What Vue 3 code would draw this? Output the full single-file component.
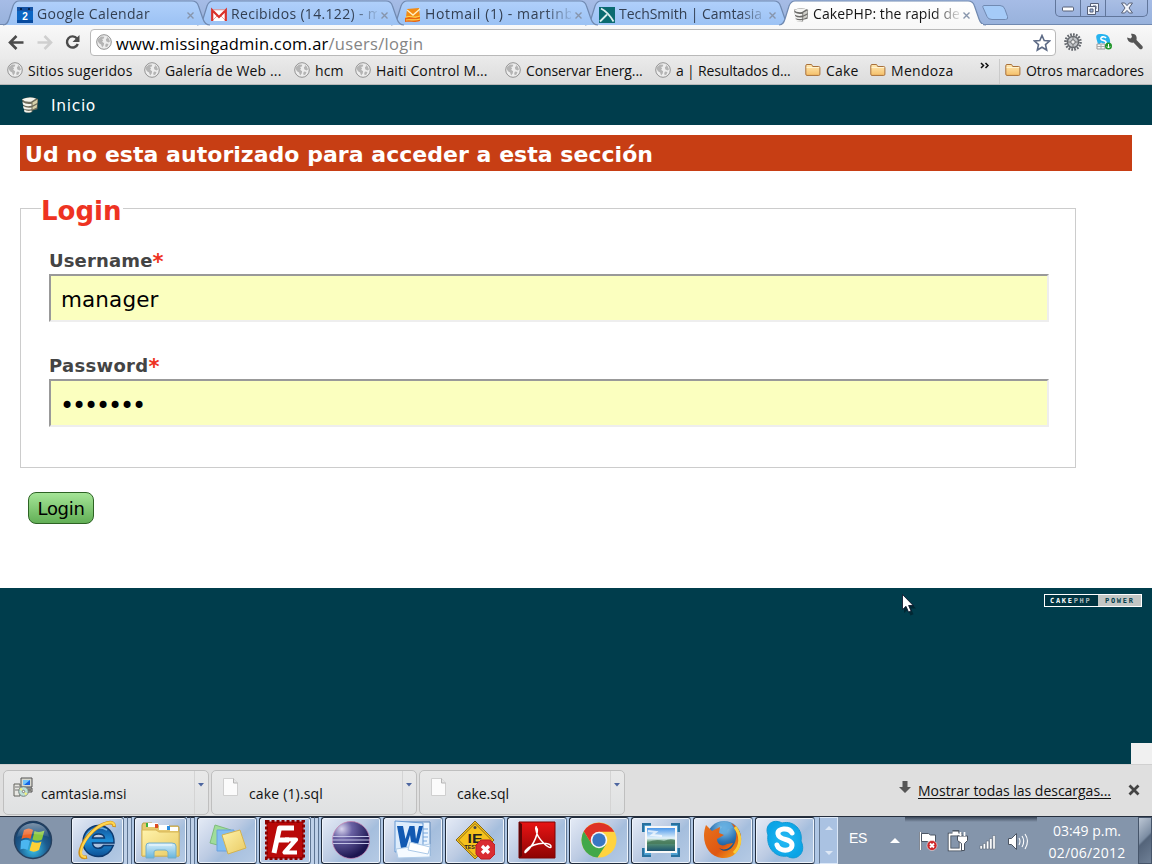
<script setup>
// Spreads a label's letters so that it fills the given width in pixels.
const vFit = {
  mounted(el, { value }) {
    const n = [...el.textContent].length
    const spacing = (value - el.getBoundingClientRect().width) / n
    el.style.letterSpacing = spacing.toFixed(3) + 'px'
  },
}

const tabs = [
  { icon: 'calendar', title: 'Google Calendar', width: 113 },
  { icon: 'gmail', title: 'Recibidos (14.122) - m', width: 150 },
  { icon: 'hotmail', title: 'Hotmail (1) - martinbr', width: 155 },
  { icon: 'techsmith', title: 'TechSmith | Camtasia', width: 143 },
  { icon: 'cake', title: 'CakePHP: the rapid dev', width: 154, active: true },
]

const bookmarks = [
  { icon: 'globe', title: 'Sitios sugeridos', width: 104.5 },
  { icon: 'globe', title: 'Galería de Web ...', width: 116.5 },
  { icon: 'globe', title: 'hcm', width: 28.5 },
  { icon: 'globe', title: 'Haiti Control M...', width: 111.5 },
  { icon: 'globe', title: 'Conservar Energ...', width: 116.5 },
  { icon: 'globe', title: 'a | Resultados d...', width: 114.5 },
  { icon: 'folder', title: 'Cake', width: 32.5 },
  { icon: 'folder', title: 'Mendoza', width: 62.5 },
]

const downloads = [
  { icon: 'msi', title: 'camtasia.msi', width: 85.5 },
  { icon: 'file', title: 'cake (1).sql', width: 74 },
  { icon: 'file', title: 'cake.sql', width: 52 },
]

const apps = [
  { icon: 'ie', stack: true },
  { icon: 'explorer', stack: true },
  { icon: 'notes' },
  { icon: 'filezilla', stack: true },
  { icon: 'eclipse' },
  { icon: 'word' },
  { icon: 'ietester' },
  { icon: 'acrobat' },
  { icon: 'chrome' },
  { icon: 'snip' },
  { icon: 'firefox' },
  { icon: 'skype' },
]
</script>

<template>
  <div class="screen">
    <svg class="sprites" width="0" height="0">
      <defs>
        <linearGradient id="gTab" x2="0" y2="1"><stop offset="0" stop-color="#b0d0fb" /><stop offset="1" stop-color="#9cc2f4" /></linearGradient>
        <linearGradient id="gTabOn" x2="0" y2="1"><stop offset="0" stop-color="#fff" /><stop offset="1" stop-color="#f8f8f8" /></linearGradient>
        <linearGradient id="gFolder" x2="0" y2="1"><stop offset="0" stop-color="#ffe9b4" /><stop offset="1" stop-color="#f5bf68" /></linearGradient>
        <linearGradient id="gYellow" x2="1" y2="1"><stop offset="0" stop-color="#fff3ac" /><stop offset="1" stop-color="#e9ca62" /></linearGradient>
        <linearGradient id="gGlass" x2="0" y2="1"><stop offset="0" stop-color="#d7effb" /><stop offset="1" stop-color="#65b4dc" /></linearGradient>
        <radialGradient id="gOrb" cx=".5" cy=".75" r=".7"><stop offset="0" stop-color="#39c5ee" /><stop offset=".55" stop-color="#1c5b8f" /><stop offset="1" stop-color="#143a63" /></radialGradient>
        <linearGradient id="gShine" x2="0" y2="1"><stop offset="0" stop-color="#fff" stop-opacity=".75" /><stop offset="1" stop-color="#fff" stop-opacity=".1" /></linearGradient>
        <radialGradient id="gEclipse" cx=".25" cy=".2" r=".8"><stop offset="0" stop-color="#d9d5ee" /><stop offset=".35" stop-color="#6a62a4" /><stop offset="1" stop-color="#1c1550" /></radialGradient>
        <linearGradient id="gIe" x2="0" y2="1"><stop offset="0" stop-color="#0f4f96" /><stop offset=".5" stop-color="#1f8fd8" /><stop offset="1" stop-color="#0b4f94" /></linearGradient>
        <linearGradient id="gRed" x2="0" y2="1"><stop offset="0" stop-color="#e81414" /><stop offset="1" stop-color="#8d0303" /></linearGradient>
        <linearGradient id="gSky" x2="0" y2="1"><stop offset="0" stop-color="#3c8ee8" /><stop offset=".45" stop-color="#e4f3fb" /><stop offset=".6" stop-color="#5f9a72" /><stop offset="1" stop-color="#154c70" /></linearGradient>
        <linearGradient id="gFox" x2="1" y2="1"><stop offset="0" stop-color="#e8731c" /><stop offset=".6" stop-color="#df5711" /><stop offset="1" stop-color="#f9b41c" /></linearGradient>
        <radialGradient id="gSea" cx=".5" cy=".2" r=".8"><stop offset="0" stop-color="#8fcdf0" /><stop offset=".5" stop-color="#2f76b5" /><stop offset="1" stop-color="#10335f" /></radialGradient>
        <radialGradient id="gSkype"><stop offset="0" stop-color="#27bbf4" /><stop offset="1" stop-color="#0ba4e6" /></radialGradient>
      </defs>

      <symbol id="globe" viewBox="0 0 16 16">
        <circle cx="8" cy="8" r="7.3" fill="#ededed" stroke="#929292" />
        <path d="M2 5l3-2.600 3.300.4-.5 1.600-1.700.5 1 1.600-1 1.200 2 1.600-.4 2.100-1.600 2-1-2.800L3 9.200 1.700 7zM10.500 2.500l2.300 2 1.200 3-1.500 1-2.300-1.200-.3-2.200 1.400-.8zM10 9.500l2.500.5-1 2.500-1.800.8-.5-2z" fill="#b4b4b4" />
      </symbol>
      <symbol id="folder" viewBox="0 0 16 16">
        <path d="M.8 12.200V3.800q0-1.300 1.200-1.300h4q1 0 1.300 1l.4 1h6q1.200 0 1.200 1.200v6.500q0 1.200-1.200 1.200H2Q.8 13.400.8 12.200z" fill="url(#gFolder)" stroke="#a8703a" />
        <path d="M1.600 5.500h12.600" stroke="#fff3cf" />
      </symbol>
      <symbol id="calendar" viewBox="0 0 16 16">
        <path d="M0 0h16v16H0z" fill="#0b66c3" /><path d="M0 0h16v4H0z" fill="#1553a4" /><path d="M0 13h16v3H0z" fill="#084a9f" />
        <path d="M3 1h2v2H3zM11 1h2v2h-2z" fill="#07264f" />
        <text x="8" y="13" text-anchor="middle" font-family="Liberation Sans, sans-serif" font-weight="bold" font-size="10" fill="#fff">2</text>
      </symbol>
      <symbol id="gmail" viewBox="0 0 16 16">
        <path d="M1 3h14v11H1z" fill="#fff" /><path d="M1 14l5-5M15 14l-5-5" stroke="#e8a49e" />
        <path d="M1.200 14V3.200L8 10l6.800-6.800V14" fill="none" stroke="#d9322b" stroke-width="2.200" /><path d="M2 2.800h12" stroke="#e9908a" />
      </symbol>
      <symbol id="hotmail" viewBox="0 0 16 16">
        <path d="M2 2l12-1 1 9-7 1-7-1z" fill="#f38b13" /><path d="M2 3l6 5 7-6" fill="none" stroke="#fff0c2" stroke-width="1.400" />
        <path d="M0 11c4-3 7 2 15-2v5c-6 2-10 0-15 1z" fill="#e96712" /><path d="M1 10c5-2 8 2 14-1M1 13c4-1 8 1 14-1" fill="none" stroke="#ffd84f" stroke-width="1.200" />
      </symbol>
      <symbol id="techsmith" viewBox="0 0 16 16">
        <path d="M0 0h16v16H0z" fill="#0a6b70" /><path d="M2 1.500Q9 5 14.500 14.500M1 14.500l7-7" fill="none" stroke="#dcefee" stroke-width="1.800" />
      </symbol>
      <symbol id="cake" viewBox="0 0 18 18">
        <path d="M1 3.200Q9-.5 17 3l-.6 10.200-5 1.200V16q-5 1.500-7.800-.5z" fill="#6f6c5b" />
        <path d="M1 3.300Q8 .3 15 2.500L10 5.700Q4 6.500 1 3.300zM1.500 6q4 2.800 9 1.700v2Q5 11 2 8.500zM2 10q3.500 2.500 8.500 1.500v1.700Q5.500 14.300 2.500 12.500zM3 13.600q3 2 7.500 1v1.300q-4 1.300-7 0z" fill="#f5f5ed" />
        <path d="M11.500 6.600l5-3-.3 3.500-4.700 2.500zM11.500 11l4.500-2.400-.2 3-4.300 1.900z" fill="#d6d1aa" />
      </symbol>
      <symbol id="msi" viewBox="0 0 20 20">
        <path d="M1 7h6v12H1z" fill="#e8e8e3" stroke="#62625c" /><path d="M2 10h4M2 13h4" stroke="#777" />
        <path d="M8 1h11v9H8z" fill="#d8d8cf" stroke="#555" /><path d="M10 3h7v5h-7z" fill="#1565e3" /><path d="M10 3h7l-6 5h-1z" fill="#70c4fa" />
        <path d="M8 11h11v4H8z" fill="#c8c8bf" stroke="#555" /><path d="M15 13h3" stroke="#333" />
        <circle cx="10.500" cy="14.500" r="4.800" fill="#bde0d7" stroke="#77817e" /><path d="M10.500 14.500l-4-2 1.500-2zM10.500 14.500l4 2-2 2z" fill="#f1ef7b" /><circle cx="10.500" cy="14.500" r="1.200" fill="#fff" stroke="#777" />
      </symbol>
      <symbol id="file" viewBox="0 0 20 20">
        <path d="M2.500 1.500h10l4 4.500v12.500h-14z" fill="#fbfbfb" stroke="#cfcfcf" /><path d="M12.500 1.500V6h4" fill="#e5e5e5" stroke="#b5b5b5" />
      </symbol>

      <symbol id="ie" viewBox="0 0 40 40">
        <path d="M36 23H14.500c.5 6 8 7 11 2.500h9.800C32 34 26 36.500 20.500 36.500 11 36.500 5 30 5 22 5 12 12 5.500 20.500 5.500 30 5.500 36.500 13 36 23zM14.500 18h12c-.5-5.500-11.200-5.500-12 0z" fill="url(#gIe)" stroke="#0c3a70" stroke-width="1.500" />
        <path d="M8 17c3-8 12-12 21-7" fill="none" stroke="#8ed4ff" stroke-width="1.500" opacity=".7" />
        <path d="M9 37C-3 40 2 23 15 11 24 3 37-1 36 7" fill="none" stroke="#cf9118" stroke-width="3.600" /><path d="M8 37C-2 38 4 22 15 11 24 3 37-1 36 6" fill="none" stroke="#ffd54e" stroke-width="2.200" />
      </symbol>
      <symbol id="explorer" viewBox="0 0 40 40">
        <path d="M2 3h9l2 3h24q1 0 1 2v28H1V5z" fill="#e5c96f" stroke="#bd9f49" /><path d="M5 3h5v4H5z" fill="#3bb23b" /><path d="M7 3h10v4H7zM18 5h10v5H18zM29 7h8v4h-8z" fill="#fff" /><path d="M14 4h3v4h-3z" fill="#dc4b24" /><path d="M26 6h3v4h-3z" fill="#2b8ce0" />
        <path d="M1 10h14l3 2h20v24H1z" fill="url(#gYellow)" stroke="#d8b756" />
        <path d="M5 38V26q0-3 3-3h23q4 0 4 3v12h-8v-6q-1-2-3-2h-8q-3 0-3 2v6z" fill="url(#gGlass)" stroke="#72aecb" /><path d="M8 25h23" stroke="#fff" opacity=".8" />
      </symbol>
      <symbol id="notes" viewBox="0 0 40 40">
        <path d="M8 5l16 5-6 17-15-4z" fill="#a0dd9a" stroke="#7fbd7d" /><path d="M10 10h17v21H10z" fill="#82bdf3" stroke="#69a1df" /><path d="M15 15l18-5 6 18-18 6z" fill="url(#gYellow)" stroke="#d3b352" />
      </symbol>
      <symbol id="filezilla" viewBox="0 0 40 40">
        <path d="M1.500 1.500h37v37h-37z" fill="#b50606" stroke="#8c0202" stroke-width="3" stroke-dasharray="3 2" /><path d="M3 3h34v34H3z" fill="#b90909" />
        <path d="M9 33L14.500 8H29M12 20h12" fill="none" stroke="#fff" stroke-width="5" stroke-linejoin="round" /><path d="M20 19.500h11L19.500 32.500H32" fill="none" stroke="#fff" stroke-width="4.200" stroke-linejoin="round" />
      </symbol>
      <symbol id="eclipse" viewBox="0 0 40 40">
        <circle cx="20" cy="20" r="18.500" fill="url(#gEclipse)" stroke="#c67baa" stroke-width=".7" /><path d="M2 16.500h36M1 20h38M2 23.500h36" stroke="#c3c3e6" stroke-width="1.200" />
      </symbol>
      <symbol id="word" viewBox="0 0 40 40">
        <path d="M10 2h27v34H8z" fill="#e9f3fd" stroke="#5e88b9" /><path d="M27 9h8M27 13h8M27 17h8M25 21h9" stroke="#79a8de" />
        <path d="M2 1l28 2v25L2 32z" fill="#ddecfc" stroke="#6799d3" /><path d="M4 6h6l2.500 13L16.500 6h5l1.500 13L26 6h4l-6 22h-5l-2-13-4 13H8z" fill="#1259b2" />
        <path d="M3 29l34-5v13l-32 1z" fill="#f5faff" stroke="#b0cce9" /><path d="M17 22l20 5-2 7-20-4z" fill="#fff" stroke="#abc9e8" />
      </symbol>
      <symbol id="ietester" viewBox="0 0 40 40">
        <path d="M20 1l19 19-19 19L1 20z" fill="#f5c11c" stroke="#85691a" /><path d="M20 3.500L36.500 20 20 36.500 3.500 20z" fill="none" stroke="#8d6d13" />
        <circle cx="20" cy="7.500" r="1.500" fill="#4a4a4a" /><text x="20" y="23" text-anchor="middle" font-family="Liberation Sans, sans-serif" font-weight="bold" font-size="12.500" textLength="15" lengthAdjust="spacingAndGlyphs" fill="#222">IE</text>
        <text x="20" y="29" text-anchor="middle" font-family="Liberation Sans, sans-serif" font-weight="bold" font-size="6" textLength="21" lengthAdjust="spacingAndGlyphs" fill="#222">TESTER</text>
        <path d="M26 20h9l5 5v9l-5 5h-9l-5-5v-9z" fill="#d92d32" stroke="#b92124" /><path d="M27 26l7 7M34 26l-7 7" stroke="#fff" stroke-width="3.200" />
      </symbol>
      <symbol id="acrobat" viewBox="0 0 40 40">
        <path d="M2 2h36v36H2z" fill="url(#gRed)" stroke="#7c0505" /><path d="M2 2l3 2v32l-3 2z" fill="#5d0505" />
        <path d="M19 7c4 4-2 18-10 25-2 2-2-3 8-7 8-3 18-2 17 2-1 3-14-8-15-17-1-3 1-4 0-3z" fill="none" stroke="#fff" stroke-width="1.500" />
      </symbol>
      <symbol id="chrome" viewBox="0 0 40 40">
        <circle cx="20" cy="20" r="17.500" fill="#ffd33f" />
        <path d="M12.900 24.200L4.800 11.300A17.500 17.500 0 0 0 18.500 37.500L27.200 24.200z" fill="#42a84a" />
        <path d="M4.800 11.300A17.500 17.500 0 0 1 35.300 11.800H20L12.900 24.200z" fill="#de3226" />
        <circle cx="20" cy="20" r="8.300" fill="#f6f6f6" /><circle cx="20" cy="20" r="6.700" fill="#3977c3" />
      </symbol>
      <symbol id="snip" viewBox="0 0 40 40">
        <path d="M3.500 12V5.500H10M30 5.500h6.500V12M36.500 28v6.500H30M10 34.500H3.500V28" fill="none" stroke="#28719f" stroke-width="5" /><path d="M4 12V6h6M30 6h6v6M36 28v6h-6M10 34H4v-6" fill="none" stroke="#5baee0" stroke-width="1.500" />
        <path d="M5 7h30v25H5z" fill="url(#gSky)" stroke="#f8f8f8" stroke-width="2" /><path d="M6 23q8-5 17-2 6-3 11-1v4H6z" fill="#47795a" opacity=".8" /><path d="M7 11l8 1-4 3 10 1" fill="none" stroke="#fff" stroke-width="2" opacity=".7" />
      </symbol>
      <symbol id="firefox" viewBox="0 0 40 40">
        <circle cx="21" cy="18" r="17" fill="url(#gSea)" /><path d="M14 3l5 4-3 4 7 3 2-5 5-1-2-5" fill="#5faade" opacity=".8" />
        <path d="M3 5l6 6 8-4-1 6 5 2-7 4c0 6 6 8 10 5l6-1c-3 6-9 8-14 5 8 8 19-2 17-16-1-4-3-7-5-9 7 3 11 11 10 18C37 33 28 39 19 38 5 37-3 21 3 5z" fill="url(#gFox)" />
        <path d="M32 7c7 9 6 19-1 26" fill="none" stroke="#f9ce3b" stroke-width="3" />
      </symbol>
      <symbol id="skype" viewBox="0 0 40 40">
        <path d="M3 15C-1 5 8-2 17 3 29 0 38 10 36 21c6 12-5 21-14 15C10 38 1 27 3 15z" fill="url(#gSkype)" stroke="#1099d4" />
        <path d="M27 13c-3-6-15-5-14 1 1 7 14 4 14 11 0 7-13 7-15 0" fill="none" stroke="#fff" stroke-width="5" stroke-linecap="round" />
      </symbol>
    </svg>

    <header class="tabstrip">
      <div v-for="t in tabs" :key="t.title" class="tab" :class="{ active: t.active }">
        <svg class="tab-shape" width="207" height="26" viewBox="0 0 207 26">
          <path d="M0 25c4 0 5-3 6-6L10 6q2-5 6-5H189q5 0 6.500 5L200 19c1 3 3 6 7 6" :fill="t.active ? 'url(#gTabOn)' : 'url(#gTab)'" stroke="#7089b0" stroke-width="1.200" />
          <path v-if="t.active" d="M4 25h200" stroke="#f8f8f8" stroke-width="2" />
        </svg>
        <svg class="i16"><use :href="'#' + t.icon" /></svg>
        <span class="tab-title"><span v-fit="t.width">{{ t.title }}</span></span>
        <svg class="tab-x" width="9" height="9" viewBox="0 0 9 9"><path d="M1.500 1.500l6 6M7.500 1.500l-6 6" stroke="#8795ac" stroke-width="1.400" /></svg>
      </div>
      <svg class="newtab" width="30" height="18" viewBox="0 0 30 18"><path d="M2.500 1.500H19q4 0 5 4l2.500 7q1 3-2 3H11q-4 0-5-3L2 3.500q-.5-2 .5-2z" fill="#a5cbf8" stroke="#718ab2" /></svg>
      <div class="winbtns">
        <div><svg width="14" height="8" viewBox="0 0 14 8"><rect x="1.500" y="2" width="11" height="4" rx="1" fill="#fff" stroke="#566078" /></svg></div>
        <div><svg width="14" height="14" viewBox="0 0 14 14"><path d="M4.500 1.500h8v8h-8zM7 4h3v3H7z" fill="#f2f5fb" stroke="#566078" /><path d="M1.500 4.500h8v8h-8z" fill="#f2f5fb" stroke="#566078" /><path d="M4 7h3v3H4z" fill="#9db5df" stroke="#566078" /></svg></div>
        <div><svg width="14" height="12" viewBox="0 0 14 12"><path d="M1.500 1h3.200L7 3.600 9.300 1h3.200L9 6l3.500 5H9.300L7 8.400 4.700 11H1.500L5 6z" fill="#f2f5fb" stroke="#566078" /></svg></div>
      </div>
    </header>

    <div class="toolbar">
      <svg width="86" height="30" viewBox="0 0 86 30">
        <path d="M23.500 17.500H10M16.500 11l-6.500 6.500 6.500 6.500" fill="none" stroke="#4b4b4b" stroke-width="2.600" />
        <path d="M37.500 17.500H51M44.500 11l6.500 6.500-6.500 6.500" fill="none" stroke="#cfcfcf" stroke-width="2.600" />
        <path d="M77 13.500a5.600 5.600 0 1 0 .8 5.500" fill="none" stroke="#4b4b4b" stroke-width="2.400" /><path d="M79.500 10v7h-7z" fill="#4b4b4b" />
      </svg>
      <div class="omnibox">
        <svg class="i16"><use href="#globe" /></svg>
        <span class="url"><span v-fit="212.5">www.missingadmin.com.ar</span><span v-fit="95" class="path">/users/login</span></span>
        <svg class="star" width="18" height="18" viewBox="0 0 18 18"><path d="M9 1.500l2.200 5 5.300.5-4 3.600 1.200 5.400L9 13.200 4.300 16l1.200-5.400-4-3.600 5.300-.5z" fill="#fff" stroke="#5d6b86" stroke-width="1.600" /></svg>
      </div>
      <svg class="ext" width="18" height="18" viewBox="0 0 18 18"><circle cx="9" cy="9" r="7.500" fill="none" stroke="#62666c" stroke-width="2.600" stroke-dasharray="1.700 1.227" /><circle cx="9" cy="9" r="5.600" fill="#c3c6ca" stroke="#65696e" stroke-width="1.500" /><circle cx="9" cy="9" r="2.200" fill="#eee" stroke="#686c70" /><path d="M9 4v3M9 11v3M4 9h3M11 9h3" stroke="#777" /></svg>
      <svg class="ext" width="18" height="18" viewBox="0 0 18 18"><path d="M1.500 6Q0 1 5 1q9-1 10 6 1 5-4 7-8 1-9.500-8z" fill="#26b3ef" /><path d="M11 5C9.500 3 5.500 3.500 6 6c.5 2 5 1 5 3.500S7 12 5.500 10" fill="none" stroke="#fff" stroke-width="1.700" /><path d="M2 11h8v5H2z" fill="#f7f7f7" stroke="#999" /><path d="M2 13.500h8M6 11v5" stroke="#aaa" /><circle cx="13.500" cy="13" r="3.500" fill="#23962c" /><path d="M13.500 11v4M12 13.500l1.500 1.500 1.500-1.500" fill="none" stroke="#fff" /></svg>
      <svg class="ext" width="18" height="18" viewBox="0 0 18 18"><path d="M1 4.500l3.500 1L6 4 5 .8C9 0 11.500 3 10.500 7l6 6.200q.8 1.500-.3 2.600-1.200 1-2.500.2L7.500 9.500C4 10.500 1.500 8 1 4.500z" fill="#555" /></svg>
    </div>

    <nav class="bookmarks">
      <div v-for="b in bookmarks" :key="b.title" class="bm"><svg class="i16"><use :href="'#' + b.icon" /></svg><span v-fit="b.width">{{ b.title }}</span></div>
      <svg class="more" width="10" height="8" viewBox="0 0 10 8"><path d="M1 1l2.500 2.500L1 6M5.500 1L8 3.500 5.500 6" fill="none" stroke="#111" stroke-width="1.500" /></svg>
      <div class="bm other"><svg class="i16"><use href="#folder" /></svg><span v-fit="118">Otros marcadores</span></div>
    </nav>

    <main class="page">
      <div class="menu"><svg width="18" height="18"><use href="#cake" /></svg><span v-fit="45">Inicio</span></div>
      <div class="content">
        <div class="flash"><span v-fit="628">Ud no esta autorizado para acceder a esta sección</span></div>
        <div class="fieldset">
          <div class="legend"><span v-fit="80.5">Login</span></div>
          <div class="label"><span v-fit="103.5">Username</span><i>*</i></div>
          <div class="field"><span v-fit="97.5">manager</span></div>
          <div class="label second"><span v-fit="99.5">Password</span><i>*</i></div>
          <div class="field dots"><span v-fit="84">•••••••</span></div>
        </div>
        <button class="submit"><span v-fit="47">Login</span></button>
      </div>
      <div class="foot">
        <svg class="cursor" width="18" height="24" viewBox="0 0 18 24"><path d="M3 3v17l4-3.500 2.500 6 3-1.200L10 15.500h5z" fill="#00141c" opacity=".5" /><path d="M1.500 1.500v15l3.500-3.200 2.500 5.700 2.600-1-2.500-5.500h4.600z" fill="#fff" stroke="#080d22" stroke-width=".8" /></svg>
        <div class="power"><span class="cp">CAKE<i>PHP</i></span><span class="pw">POWER</span></div>
        <div class="corner"></div>
      </div>
    </main>

    <section class="shelf">
      <div v-for="d in downloads" :key="d.title" class="dl">
        <svg class="dl-icon" width="20" height="20"><use :href="'#' + d.icon" /></svg>
        <span v-fit="d.width">{{ d.title }}</span>
        <div class="dl-menu"><svg width="6" height="4" viewBox="0 0 6 4"><path d="M0 0h6L3 3.500z" fill="#4d66a0" /></svg></div>
      </div>
      <div class="show-all">
        <svg width="14" height="14" viewBox="0 0 14 14"><path d="M4.500 0h5v6h3.500L7 12 1 6h3.500z" fill="#555" /></svg>
        <u v-fit="193">Mostrar todas las descargas...</u>
        <svg class="shelf-x" width="12" height="12" viewBox="0 0 12 12"><path d="M1.500 1.500l9 9M10.500 1.500l-9 9" stroke="#444" stroke-width="2.800" /></svg>
      </div>
    </section>

    <footer class="taskbar">
      <div class="start">
        <svg width="40" height="40" viewBox="0 0 40 40">
          <circle cx="20" cy="20" r="18.500" fill="url(#gOrb)" stroke="#26405f" stroke-width="1.500" />
          <path d="M11 10q5-3 9 0l-2.500 9q-4-2.500-9 0z" fill="#ed6427" /><path d="M21.500 11q5 2 10-.5L29 19.500q-4 2.500-9.500 0z" fill="#8ac63e" /><path d="M8 21q5-2.500 9 0l-2.500 9q-4-2-7-.5z" fill="#4bb6f0" /><path d="M19 21.500q5 2.500 9.500 0L26 30q-5 3-9.500.5z" fill="#fdd037" />
          <path d="M4 17Q6 4 20 3q14 1 16 14-15-6-32 0z" fill="url(#gShine)" opacity=".6" />
        </svg>
      </div>
      <div class="apps">
        <div v-for="a in apps" :key="a.icon" class="app" :class="{ stack: a.stack }">
          <div class="face"><svg class="app-icon" width="40" height="40"><use :href="'#' + a.icon" /></svg></div>
          <template v-if="a.stack"><b></b><b></b></template>
        </div>
      </div>
      <div class="scroller">
        <svg width="8" height="4" viewBox="0 0 8 4"><path d="M0 4h8L4 0z" fill="#dde7f5" /></svg>
        <svg width="8" height="4" viewBox="0 0 8 4"><path d="M0 0h8L4 4z" fill="#dde7f5" /></svg>
      </div>
      <div class="tray">
        <div class="edge"></div>
        <span v-fit="18" class="lang">ES</span>
        <svg class="tray-icons" width="144" height="28" viewBox="0 0 144 28">
          <path d="M1 16l5-5 5 5z" fill="#fff" />
          <path d="M31.500 5v18" stroke="#4d5664" stroke-width="3" /><path d="M31.500 5v18" stroke="#fff" stroke-width="1.600" /><path d="M32.500 6.500h7l2 1.500h5v8h-6l-2-1.500h-6z" fill="#fff" stroke="#4d5664" /><circle cx="43" cy="18.500" r="5" fill="#cf2729" stroke="#fff" stroke-width=".5" /><path d="M41 16.500l4 4M45 16.500l-4 4" stroke="#fff" stroke-width="1.800" />
          <path d="M60.500 7.500h11v15h-11zM63.500 5h5v2" fill="none" stroke="#39434f" stroke-width="3.400" /><path d="M60.500 7.500h11v15h-11zM63.500 5.500h5v2" fill="none" stroke="#fff" stroke-width="1.800" /><path d="M68.500 9h10v4.500l-3 3v7h-3v-7l-4-3z" fill="#fff" stroke="#4a5360" /><path d="M71.500 5v4M75.500 5v4" stroke="#fff" stroke-width="1.700" />
          <path d="M91 18.500h2.400V22H91zM94.200 16.500h2.400V22h-2.400zM97.400 14h2.400v8h-2.400zM100.600 11.500h2.400V22h-2.400zM103.800 8.500h2.400V22h-2.400z" fill="#fff" stroke="#4f5a6a" stroke-width=".5" />
          <path d="M119.500 11.500h3l5-5v16l-5-5h-3z" fill="#fff" stroke="#4d5664" /><path d="M130 11q2 3 0 7M133 9q3.500 5 0 11M136 7q5 7 0 15" fill="none" stroke="#fff" stroke-width="1.100" />
        </svg>
        <div class="clock"><span v-fit="68">03:49 p.m.</span><span v-fit="77">02/06/2012</span></div>
      </div>
      <div class="desk"></div>
    </footer>
  </div>
</template>

<style>
body { margin: 0; overflow: hidden; }
</style>

<style scoped>
.screen { position: relative; width: 1152px; height: 864px; overflow: hidden; display: flex; flex-direction: column; background: #fff; font-family: "Open Sans", "Noto Sans", sans-serif; font-size: 14px; color: #111; box-sizing: border-box; }
.screen * { box-sizing: border-box; }
.sprites { position: absolute; }
svg { display: block; flex: none; }
span, u { white-space: nowrap; }
.i16 { width: 16px; height: 16px; }

.tabstrip { height: 25px; flex: none; display: flex; padding-left: 3px; background: linear-gradient(#a6bce6, #98b2dc); border-bottom: 1px solid #7089b0; }
.tab { position: relative; z-index: 1; width: 207px; height: 26px; flex: none; margin-right: -13px; padding-left: 14px; display: flex; align-items: center; color: #333f52; }
.tab:nth-child(1) { z-index: 5; }
.tab:nth-child(2) { z-index: 4; }
.tab:nth-child(3) { z-index: 3; }
.tab:nth-child(4) { z-index: 2; }
.tab.active { z-index: 6; color: #151515; }
.tab > * { position: relative; }
.tab .tab-shape { position: absolute; left: 0; top: 0; }
.tab .i16 { margin-top: 4px; }
.tab.active .i16 { filter: grayscale(.85); }
.tab-title { width: 146px; margin-left: 4px; overflow: hidden; line-height: 20px; margin-top: 2px; -webkit-mask-image: linear-gradient(90deg, #000 120px, transparent 150px); mask-image: linear-gradient(90deg, #000 120px, transparent 150px); }
.tab-x { margin: 4px 0 0 3px; }
.newtab { margin: 4px 0 0 8px; }
.winbtns { display: flex; margin-left: auto; margin-right: 4px; height: 17px; border: 1px solid #61769b; border-top: 0; border-radius: 0 0 5px 5px; background: linear-gradient(#a9bee4, #9ab2de); }
.winbtns div { width: 25px; display: flex; align-items: center; justify-content: center; border-right: 1px solid #61769b; }
.winbtns div svg { margin-top: 1px; }
.winbtns div:last-child { width: 41px; border: 0; }
.winbtns div:last-child svg { margin-top: -1px; }

.toolbar { height: 34px; flex: none; display: flex; align-items: flex-start; background: linear-gradient(#f9f9f9, #eaeaea); }
.omnibox { margin: 4px 0 0 4px; width: 966px; height: 27px; display: flex; align-items: center; padding: 0 4px 0 5px; background: #fff; border: 1px solid #b9b9b9; border-radius: 4px; }
.omnibox .i16 { margin-top: -1px; }
.url { margin-left: 4px; font-size: 16.500px; line-height: 24px; padding-top: 2px; flex: 1; color: #000; }
.url .path { color: #858585; }
.ext { margin: 8px 0 0 8px; }
.ext + .ext { margin-left: 13px; }

.bookmarks { height: 26px; flex: none; display: grid; grid-template-columns: 137px 150px 61px 150px 150px 150px 65px 110px 24px 1fr; padding-left: 7px; background: linear-gradient(#e9e9e9, #dcdcdc); border-bottom: 1px solid #b7b7b7; }
.bm { display: flex; gap: 5px; align-items: center; line-height: 20px; padding-bottom: 2px; }
.bm .i16 { margin-top: -1px; }
.more { margin-top: 3px; }
.other { border-left: 1px solid #cbcbcb; margin-left: -5px; padding-left: 5px; }

.page { height: 679px; flex: none; display: flex; flex-direction: column; font-family: "DejaVu Sans", Verdana, sans-serif; }
.menu { height: 40px; flex: none; background: #003d4c; color: #fff; display: flex; align-items: center; padding-left: 21px; gap: 12px; font-size: 15.500px; }
.menu span { padding-top: 2px; }
.content { height: 463px; flex: none; padding: 10px 20px 0; }
.flash { height: 36px; background: #c73e14; color: #fff; font-weight: bold; font-size: 22px; line-height: 39px; padding-left: 5px; }
.fieldset { width: 1056px; height: 260px; margin-top: 37px; border: 1px solid #ccc; padding: 0 26px 0 28px; }
.legend { width: 82px; height: 34px; margin: -16px 0 0 -8px; background: #fff; font-size: 26px; font-weight: bold; line-height: 36px; color: #ee3322; }
.label { margin-top: 23px; height: 24px; font-size: 18px; font-weight: bold; line-height: 22px; color: #444; }
.label i { font-style: normal; font-size: 21px; line-height: 20px; vertical-align: -2px; color: #ee3322; }
.label.second { margin-top: 33px; }
.field { width: 1000px; height: 48px; border: 2px solid; border-color: #999 #eee #eee #999; background: #fbffbf; font-size: 21.500px; line-height: 47px; padding-left: 10px; color: #000; }
.dots { font-size: 24px; line-height: 51px; padding-left: 9px; }
.submit { display: block; margin: 24px 0 0 8px; width: 66px; height: 32px; padding: 1px 0 0; border: 1px solid #2d6324; border-radius: 8px; background: linear-gradient(#a5e597, #62af56); font-family: "DejaVu Sans", Verdana, sans-serif; font-size: 18px; line-height: 30px; color: #000; }
.foot { position: relative; flex: 1; background: #003d4c; }
.cursor { position: absolute; left: 901px; top: 5px; }
.power { position: absolute; left: 1044px; top: 6px; width: 98px; height: 13px; display: flex; border: 1px solid #fff; background: #003441; font: bold 7px/12px "DejaVu Sans Mono", monospace; letter-spacing: 1.700px; color: #fff; }
.cp { width: 53px; padding-left: 5px; }
.cp i { font-style: normal; color: #aebbbd; }
.pw { width: 43px; padding-left: 7px; background: #c3c6c4; color: #003d4c; }
.corner { position: absolute; right: 0; bottom: 0; width: 21px; height: 21px; background: #f0f0f0; }

.shelf { height: 52px; flex: none; display: flex; padding: 5px 12px 0 3px; gap: 2px; background: #dfdfdf; border-top: 1px solid #d0d0d0; }
.dl { width: 206px; height: 45px; display: flex; border: 1px solid #bfbfbf; border-radius: 5px; background: linear-gradient(#e9e9e9, #dfe1e2); line-height: 20px; }
.dl-icon { margin: 6px 0 0 9px; }
.dl > span { margin: 13px 0 0 8px; }
.dl-menu { width: 14px; margin-left: auto; padding: 12px 0 0 3px; border-left: 1px solid #d4d4d4; }
.show-all { margin-left: auto; display: flex; line-height: 20px; padding-top: 11px; }
.show-all u { margin-left: 6px; text-underline-offset: 2px; }
.shelf-x { margin: 3px 0 0 17px; }

.taskbar { height: 48px; flex: none; display: flex; background: #8495ab; border-top: 1px solid #252e3c; }
.start { width: 71px; flex: none; padding: 3px 0 0 13px; }
.apps { width: 748px; flex: none; display: flex; gap: 2px; background: #afc7e5; }
.app { display: flex; width: 60px; flex: none; }
.app.stack { width: 61px; }
.app.stack:nth-child(4) { width: 60px; }
.face { width: 60px; height: 47px; display: flex; justify-content: center; align-items: center; border: 1px solid #202b3b; border-right-color: #5f7693; border-radius: 3px; background: linear-gradient(135deg, #e5ebf6 0%, #bccbe3 45%, #a5bedd 60%, #b6cbe5); box-shadow: inset 0 0 0 1px #eef4fc; }
.app-icon { margin-top: -2px; }
.stack .face { width: 53px; }
.app b { width: 4px; height: 47px; border-right: 1px solid #5d7492; border-top: 1px solid #202b3b; background: #bed0e8; }
.scroller { width: 19px; flex: none; display: flex; flex-direction: column; justify-content: space-between; align-items: center; padding: 8px 0 8px; background: #aac2e2; border: 1px solid #dce8f8; border-left-color: #637892; }
.tray { position: relative; flex: 1; display: flex; color: #fff; }
.edge { position: absolute; left: 67px; top: 0; width: 132px; height: 5px; background: linear-gradient(#3c485a, #8495ab); }
.lang { font: 14px/20px "Liberation Sans", sans-serif; margin: 11px 0 0 11px; }
.tray-icons { margin: 10px 0 0 22px; }
.clock { width: 80px; margin-left: 14px; display: flex; flex-direction: column; align-items: center; font-size: 14px; line-height: 22px; padding-top: 3px; }
.desk { width: 14px; flex: none; border: 1px solid #46556a; background: linear-gradient(135deg, #bcc7d5 0%, #7c8da3 45%, #54647a 50%, #6f8096); }
</style>
